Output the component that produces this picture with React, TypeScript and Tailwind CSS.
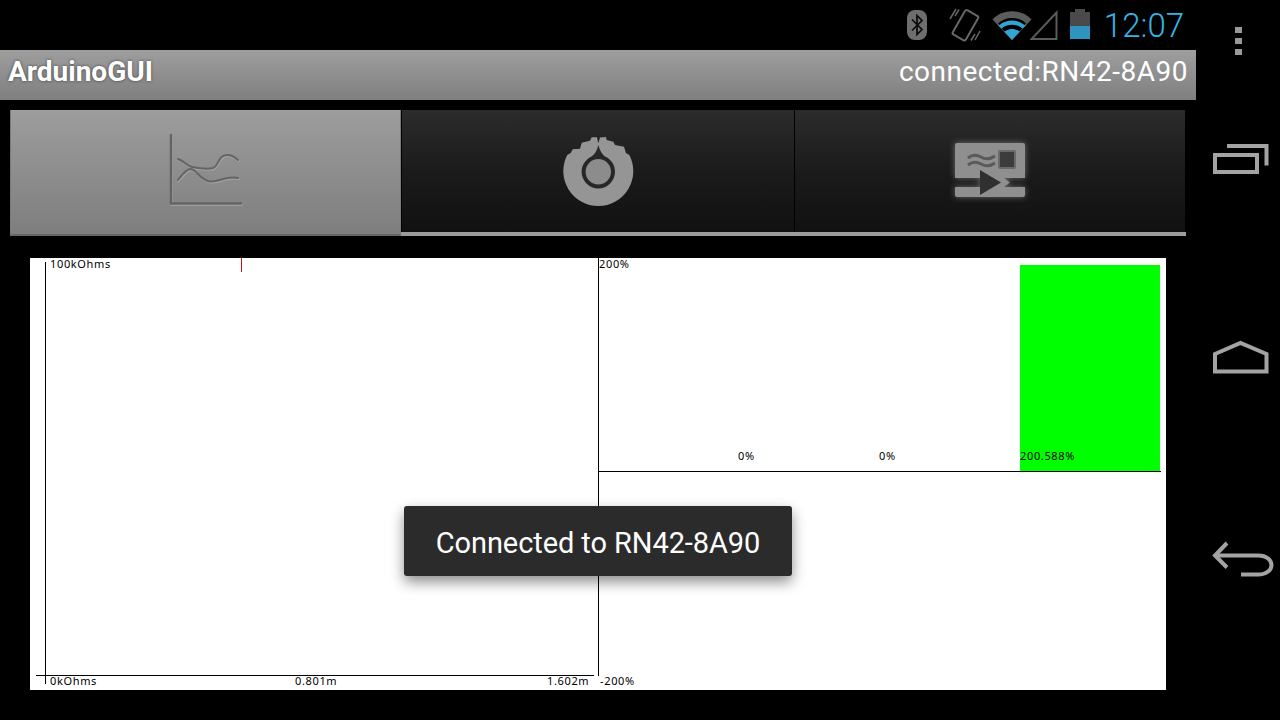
import React from 'react';

const ChartLabel: React.FC<{ className: string; children: React.ReactNode }> = ({ className, children }) => (
    <span className={`absolute font-['Noto_Sans',sans-serif] text-[11px] leading-[12px] tracking-[0.65px] text-black whitespace-nowrap ${className}`}>
        {children}
    </span>
);

const GraphIcon = () => (
    <svg width="76" height="76" viewBox="0 0 76 76" fill="none" strokeLinecap="round" className="blur-[0.3px]">
        <g stroke="#a6a6a6" strokeWidth="2" transform="translate(0.6 1)">
            <path d="M3 1V69.500H73" strokeWidth="2.500" />
            <path d="M10 25C16 27 19 32 24 33C32 34.500 40 35.500 45 34C51 32 50 21 59 21C63 21 67 23 70 26" />
            <path d="M10 46C14 41 18 35 23 35C29 36 32 46 42 47.500C52 48.500 58 41 70 44" />
        </g>
        <g stroke="#646464" strokeWidth="2">
            <path d="M3 1V69.500H73" strokeWidth="2.500" />
            <path d="M10 25C16 27 19 32 24 33C32 34.500 40 35.500 45 34C51 32 50 21 59 21C63 21 67 23 70 26" />
            <path d="M10 46C14 41 18 35 23 35C29 36 32 46 42 47.500C52 48.500 58 41 70 44" />
        </g>
    </svg>
);

const KnobIcon = () => (
    <svg width="72" height="72" viewBox="0 0 72 72" className="ml-[2px] mt-[2px] blur-[0.4px]">
        <path
            d="M35.300 7.300L37 1.500L43 1L43.700 4L50.300 5.700L52 9L61 10.700L63 17L66.400 19A35 35 0 1 1 4.200 19L7.700 17L9.700 13.300L17 12.700L18.700 6.700L27 4.700L28.700 1.300L34 1.300Z"
            fill="#959595"
        />
        <path d="M35.300 9C37 15 39 18 42 20.500C48 23 52 29 52 35.700A16.700 16.700 0 0 1 18.600 35.700C18.600 29 23 23 28.600 20.500C32 18 34 15 35.300 9Z" fill="#272727" />
        <circle cx="35.300" cy="35.700" r="12.700" fill="#8c8c8c" />
    </svg>
);

const ControlIcon = () => (
    <svg width="76" height="62" viewBox="0 0 76 62" className="blur-[0.4px] drop-shadow-[0_0_3px_rgba(190,190,190,0.5)]">
        <path d="M3 5Q3 3 5 3H71Q73 3 73 5V38H3Z" fill="#8f8f8f" />
        <path d="M3 47H73V55Q73 57 71 57H5Q3 57 3 55Z" fill="#8f8f8f" />
        <path d="M16 18Q22 13 29 17T43 16M16 25Q22 20 29 24T43 23" stroke="#5a5a5a" strokeWidth="3" fill="none" />
        <rect x="47" y="11" width="16" height="17" rx="1" fill="#3c3c3c" stroke="#6a6a6a" strokeWidth="2" />
        <path d="M38 38H52L58 42.500L52 47H38Z" fill="#8f8f8f" />
        <path d="M28 30L49 42.500L28 55Z" fill="#303030" />
    </svg>
);

const Bluetooth = () => (
    <svg width="22" height="30" viewBox="0 0 22 30">
        <rect x="1" y="0" width="20" height="30" rx="8" fill="#6e6e6e" />
        <path d="M6 9.500L16 19.500L11 24.500V5.500L16 10.500L6 20.500" stroke="#0a0a0a" strokeWidth="1.700" fill="none" />
    </svg>
);

const Vibrate = () => (
    <svg width="32" height="36" viewBox="0 0 32 36" fill="none" stroke="#686868">
        <g transform="rotate(30 16 18)">
            <rect x="9" y="4" width="15" height="28" rx="2" strokeWidth="2" />
        </g>
        <path d="M7 2L1 12M10 2.500L6 9M26 33L31 24M22 33.500L26 27" strokeWidth="1.500" />
    </svg>
);

const Wifi = () => (
    <svg width="40" height="30" viewBox="0 0 40 30">
        <path d="M0.500 9.500C10 -1.500 30 -1.500 39.500 9.500L20 30Z" fill="#5c5c5c" />
        <path d="M6 15C13 7.500 27 7.500 34 15L20 30Z" fill="#33a5d4" />
        <path d="M9.500 18.500C15 13.500 25 13.500 30.500 18.500L27.500 21.500C23 18 17 18 12.500 21.500Z" fill="#000000" />
        <path d="M14 21.500C18 18.500 22 18.500 26 21.500L20 28Z" fill="#33a5d4" />
        <path d="M6 13.500C13 6 27 6 34 13.500L32.500 15C26 9 14 9 7.500 15Z" fill="#000000" />
    </svg>
);

const Signal = () => (
    <svg width="28" height="30" viewBox="0 0 28 30">
        <path d="M26.500 2.500V29H1.500Z" fill="none" stroke="#5c5c5c" strokeWidth="2" />
    </svg>
);

const Battery = () => (
    <div className="flex h-[32px] w-[20px] flex-col items-center">
        <div className="h-[3px] w-[10px] bg-[#4a4a4a]" />
        <div className="h-[14px] w-full bg-[#4a4a4a]" />
        <div className="h-[13px] w-full bg-[#2f93bf]" />
    </div>
);

const Tab: React.FC<{ active?: boolean; className: string; children: React.ReactNode }> = ({ active, className, children }) => (
    <div
        className={`flex items-center justify-center ${className} ${
            active
                ? 'h-[126px] border-x border-b-2 border-x-[#7a7a7a] border-b-[#666666] bg-gradient-to-b from-[#9d9d9d] to-[#7e7e7e]'
                : 'h-[122px] bg-gradient-to-b from-[#2c2c2c] via-[#1b1b1b] to-[#111111]'
        }`}
    >
        {children}
    </div>
);

const App: React.FC = () => {
    return (
        <div className="flex h-[720px] w-[1280px] overflow-hidden bg-black font-['Roboto',sans-serif]">
            <div className="relative flex w-[1196px] flex-col">

                {/* Status bar */}
                <div className="flex h-[50px] items-center justify-end pr-[12px]">
                    <div className="mr-[21px]"><Bluetooth /></div>
                    <div className="mr-[11px]"><Vibrate /></div>
                    <Wifi />
                    <div className="mr-[12px] -ml-[2px]"><Signal /></div>
                    <div className="mr-[14px]"><Battery /></div>
                    <span className="pt-[2px] text-[33px] leading-[50px] font-light text-[#33b5e5]">12:07</span>
                </div>

                {/* Action bar */}
                <div className="flex h-[50px] items-center justify-between bg-gradient-to-b from-[#9e9e9e] to-[#7f7f7f] pb-[6px] pl-[8px] pr-[8px] text-white">
                    <span className="text-[28px] font-bold [text-shadow:0_0_3px_rgba(40,40,40,0.8)]">ArduinoGUI</span>
                    <span className="text-[28px] tracking-[0.5px]">connected:RN42-8A90</span>
                </div>

                {/* Tabs */}
                <div className="mx-[10px] mt-[10px] flex h-[126px] w-[1176px] items-start">
                    <Tab active className="w-[391px]"><GraphIcon /></Tab>
                    <div className="flex w-[785px] flex-col">
                        <div className="flex gap-px pl-px">
                            <Tab className="w-[392px]"><KnobIcon /></Tab>
                            <Tab className="w-[390px]"><ControlIcon /></Tab>
                        </div>
                        <div className="h-[4px] bg-[#9c9c9c]" />
                    </div>
                </div>

                {/* Charts */}
                <div className="mx-[30px] mt-[22px] flex h-[432px] w-[1136px] bg-white">
                    <div className="relative w-[568px]">
                        <div className="absolute left-[15px] top-[4px] h-[422px] w-px bg-black" />
                        <div className="absolute left-[6px] right-[4px] top-[417px] h-px bg-black" />
                        <div className="absolute left-[211px] top-0 h-[14px] w-px bg-[#d01010]" />
                        <ChartLabel className="left-[20px] top-0">100kOhms</ChartLabel>
                        <ChartLabel className="left-[20px] top-[417px]">0kOhms</ChartLabel>
                        <ChartLabel className="left-[265px] top-[417px]">0.801m</ChartLabel>
                        <ChartLabel className="left-[517px] top-[417px]">1.602m</ChartLabel>
                    </div>
                    <div className="relative w-[568px]">
                        <div className="absolute left-0 top-0 h-[418px] w-px bg-black" />
                        <div className="absolute left-[422px] top-[7px] h-[206px] w-[140px] bg-[#00ff00]" />
                        <div className="absolute left-0 top-[213px] h-px w-[563px] bg-black" />
                        <ChartLabel className="left-px top-0">200%</ChartLabel>
                        <ChartLabel className="left-[140px] top-[192px]">0%</ChartLabel>
                        <ChartLabel className="left-[281px] top-[192px]">0%</ChartLabel>
                        <ChartLabel className="left-[422px] top-[192px]">200.588%</ChartLabel>
                        <ChartLabel className="left-[2px] top-[417px]">-200%</ChartLabel>
                    </div>
                </div>

                {/* Toast */}
                <div className="absolute left-[404px] top-[506px] flex h-[70px] w-[388px] items-center justify-center rounded-[3px] bg-[#2b2b2b] pt-[6px] text-[29px] tracking-[-0.08px] text-white shadow-[0_6px_14px_rgba(0,0,0,0.45)]">
                    Connected to RN42-8A90
                </div>
            </div>

            {/* Navigation bar */}
            <div className="flex h-[720px] w-[84px] flex-col">
                <svg width="84" height="720" viewBox="1196 0 84 720" fill="none" stroke="#a3a3a3" strokeWidth="4">
                    <path d="M1235 30h7M1235 41h7M1235 52h7" strokeWidth="6" stroke="#999999" />
                    <rect x="1215" y="155" width="42" height="17" />
                    <path d="M1227 146H1266.500V165.500" />
                    <path d="M1215 371.500V354L1240.500 343L1266.500 354V371.500Z" />
                    <path d="M1227 543L1215 555.500L1227 567.500" />
                    <path d="M1215 555.500H1258C1276 555.500 1276 574.500 1258 574.500H1241" />
                </svg>
            </div>
        </div>
    );
};

export default App;
